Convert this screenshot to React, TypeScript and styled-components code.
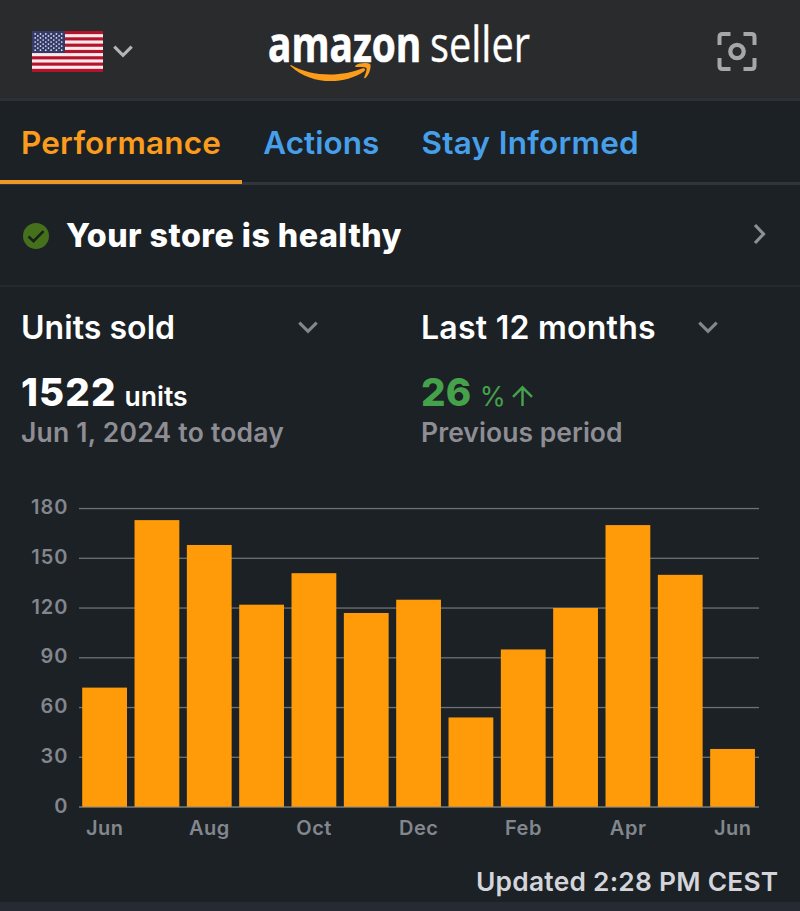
import React from "react";
import styled, { createGlobalStyle } from "styled-components";

const GlobalStyle = createGlobalStyle`
  *, *::before, *::after { box-sizing: border-box; }
  body {
    margin: 0;
    background: #1b2125;
    font-family: Inter, "Liberation Sans", sans-serif;
    -webkit-font-smoothing: antialiased;
  }
`;

const Screen = styled.div`
  width: 800px;
  height: 911px;
  display: flex;
  flex-direction: column;
  overflow: hidden;
  background: #1b2125;
  color: #fff;
`;

const Header = styled.header`
  flex: none;
  height: 101px;
  display: grid;
  grid-template-columns: 236px 1fr 236px;
  align-items: start;
  background: #2a2b2d;
  border-bottom: 3px solid #2c3037;
`;

const Region = styled.button`
  display: flex;
  align-items: center;
  gap: 10px;
  margin: 31px 0 0 32px;
  padding: 0;
  border: 0;
  background: none;
`;

const Logo = styled.svg`
  display: block;
  margin: 0 0 0 14px;
`;

const ScanButton = styled.button`
  justify-self: end;
  margin: 31px 43px 0 0;
  padding: 0;
  border: 0;
  background: none;
  svg { display: block; }
`;

const Tabs = styled.nav`
  flex: none;
  display: flex;
  height: 84px;
  box-shadow: inset 0 -3px #30353d;
`;

const Tab = styled.a<{ $active?: boolean; $spacing: number }>`
  height: 83px;
  padding: 0 21px;
  font-size: 31.5px;
  font-weight: 600;
  line-height: 84px;
  letter-spacing: ${(p) => p.$spacing}px;
  white-space: nowrap;
  color: ${(p) => (p.$active ? "#fb9c1c" : "#479fea")};
  border-bottom: ${(p) => (p.$active ? "4px solid #ec9727" : "0")};
`;

const HealthRow = styled.section`
  flex: none;
  height: 102px;
  display: flex;
  align-items: center;
  padding: 0 33px 0 22px;
  border-bottom: 2px solid #23292d;
`;

const HealthTitle = styled.h1`
  flex: 1;
  margin: 1px 0 0 16px;
  font-size: 32.2px;
  font-weight: 800;
  line-height: 40px;
  letter-spacing: 0.48px;
`;

const Metrics = styled.section`
  flex: none;
  display: grid;
  grid-template-columns: 400px 400px;
  height: 191px;
  padding-top: 20px;
`;

const Metric = styled.div`
  padding-left: 21px;
`;

const Picker = styled.div`
  display: flex;
  align-items: center;
  justify-content: space-between;
  width: 297px;
  height: 42px;
  svg { margin-bottom: 2px; }
`;

const PickerLabel = styled.h2<{ $spacing: number }>`
  margin: 0;
  font-size: 32px;
  font-weight: 600;
  line-height: 42px;
  letter-spacing: ${(p) => p.$spacing}px;
  white-space: nowrap;
`;

const ValueLine = styled.div<{ $positive?: boolean }>`
  display: flex;
  align-items: baseline;
  height: 48px;
  margin-top: 19px;
  line-height: 48px;
  color: ${(p) => (p.$positive ? "#46a14b" : "#fff")};
`;

const Value = styled.span<{ $spacing: number }>`
  font-size: 38.5px;
  font-weight: 800;
  letter-spacing: ${(p) => p.$spacing}px;
`;

const Unit = styled.span<{ $light?: boolean }>`
  margin-left: 8px;
  font-size: 26.5px;
  font-weight: ${(p) => (p.$light ? 400 : 600)};
`;

const Trend = styled.svg`
  margin-left: 6px;
`;

const Caption = styled.p<{ $spacing: number }>`
  margin: 0;
  font-size: 26.5px;
  font-weight: 600;
  line-height: 32px;
  letter-spacing: ${(p) => p.$spacing}px;
  color: #8e8d94;
`;

const ChartArea = styled.section`
  flex: none;
  height: 372px;
  svg { display: block; }
`;

const AxisText = styled.text<{ $spacing: number }>`
  font-size: 20px;
  font-weight: 600;
  letter-spacing: ${(p) => p.$spacing}px;
  fill: #83868d;
`;

const Updated = styled.p`
  flex: none;
  height: 52px;
  margin: 0;
  padding-right: 21.5px;
  font-size: 26.3px;
  font-weight: 600;
  line-height: 64px;
  letter-spacing: 0.27px;
  text-align: right;
  color: #d4d5da;
`;

const BottomStrip = styled.div`
  flex: 1;
  background: #262b33;
`;

const Flag = () => (
  <svg width="71" height="41" viewBox="0 0 71 41" aria-label="United States">
    <rect width="71" height="41" fill="#fbe9ec" />
    {Array.from({ length: 7 }, (_, i) => (
      <rect key={i} y={(i * 2 * 41) / 13} width="71" height={41 / 13} fill="#b3132b" />
    ))}
    <rect width="33" height="22" fill="#343b69" />
    {Array.from({ length: 9 }, (_, row) =>
      Array.from({ length: row % 2 ? 5 : 6 }, (_, col) => (
        <circle
          key={`${row}-${col}`}
          cx={3.2 + col * 5.3 + (row % 2 ? 2.65 : 0)}
          cy={2.9 + row * 2.03}
          r="0.85"
          fill="#e4e4ef"
        />
      ))
    )}
  </svg>
);

const ChevronDown = ({ color }: { color: string }) => (
  <svg width="20" height="13" viewBox="0 0 20 13" fill="none">
    <path d="M1.300 1.600 L10 10.300 L18.700 1.600" stroke={color} strokeWidth="3.2" />
  </svg>
);

const ChevronRight = () => (
  <svg width="14" height="25" viewBox="0 0 14 25" fill="none">
    <path d="M2 2 L10.500 11 L2 20" stroke="#8c9095" strokeWidth="3.2" />
  </svg>
);

const values = [72, 173, 158, 122, 141, 117, 125, 54, 95, 120, 170, 140, 35];
const months = ["Jun", "", "Aug", "", "Oct", "", "Dec", "", "Feb", "", "Apr", "", "Jun"];
const ticks = [0, 30, 60, 90, 120, 150, 180];

const BASE = 329;
const UNIT = 298.5 / 180;
const PITCH = 52.33;

const UnitsChart = () => (
  <svg width="800" height="372" viewBox="0 0 800 372">
    {ticks.map((t) => (
      <g key={t}>
        <rect x="79" y={BASE - t * UNIT - 0.6} width="680" height="1.3" fill="#6c7277" />
        <AxisText $spacing={1} x="68.5" y={BASE - t * UNIT + 5.5} textAnchor="end">
          {t}
        </AxisText>
      </g>
    ))}
    {values.map((v, i) => (
      <rect
        key={i}
        x={82.2 + i * PITCH}
        y={BASE - v * UNIT}
        width="44.8"
        height={v * UNIT}
        fill="#ff9a08"
      />
    ))}
    <rect x="79" y={BASE - 0.5} width="680" height="1" fill="#858078" opacity="0.7" />
    {months.map((m, i) =>
      m ? (
        <AxisText
          key={i}
          $spacing={0.5}
          x={104.8 + i * PITCH}
          y={BASE + 28}
          textAnchor="middle"
        >
          {m}
        </AxisText>
      ) : null
    )}
  </svg>
);

export default function App() {
  return (
    <Screen>
      <GlobalStyle />
      <Header>
        <Region aria-label="Choose marketplace">
          <Flag />
          <ChevronDown color="#b3b4b6" />
        </Region>
        <Logo width="300" height="90" viewBox="0 -10 300 90">
          <text
            transform="translate(18 51.600) scale(0.808 1)"
            fontFamily="'Open Sans', sans-serif"
            fontSize="48"
            fontWeight="700"
            fill="#fff"
            stroke="#fff"
            strokeWidth="0.700"
          >
            amazon
          </text>
          <text
            transform="translate(180 51.800) scale(0.812 1)"
            fontFamily="'Open Sans', sans-serif"
            fontSize="49"
            fontWeight="400"
            fill="#fff"
            stroke="#fff"
            strokeWidth="0.300"
          >
            seller
          </text>
          <path
            d="M41 55 C61 67 92 67 112 58.500 C115 57.500 116.500 60 113.500 61.800 C94 75 61 75 41 56.500 C40 55.500 40.300 54.700 41 55 Z"
            fill="#fb9d1b"
          />
          <path
            d="M105.500 55.500 C109 52.800 117 52.500 120 54 C121.500 55.500 120 64 115.500 68 C114.500 68.700 113.800 68.200 114.300 67 C115.700 63.500 117.200 59.300 116.300 58 C115.200 56.600 109.500 56.900 106.500 57.100 C105.300 57.200 104.700 56.300 105.500 55.500 Z"
            fill="#fb9d1b"
          />
        </Logo>
        <ScanButton aria-label="Scan">
          <svg width="40" height="41" viewBox="0 0 40 41" fill="none" stroke="#a6a7ab" strokeWidth="4">
            <path d="M2.500 14 V6 Q2.500 3 5.500 3 H13.500 M26.500 3 H34.500 Q37.500 3 37.500 6 V14 M37.500 27 V35 Q37.500 38 34.500 38 H26.500 M13.500 38 H5.500 Q2.500 38 2.500 35 V27" />
            <circle cx="20" cy="20.500" r="6.700" strokeWidth="4.300" />
          </svg>
        </ScanButton>
      </Header>

      <Tabs>
        <Tab $active $spacing={0.2}>Performance</Tab>
        <Tab $spacing={0.05}>Actions</Tab>
        <Tab $spacing={0.28}>Stay Informed</Tab>
      </Tabs>

      <HealthRow>
        <svg width="28" height="28" viewBox="0 0 28 28" fill="none">
          <circle cx="14" cy="15" r="13" fill="#45711d" />
          <path d="M6.500 15.500 L11.500 20.200 L21.500 10.200" stroke="#172119" strokeWidth="2.600" />
        </svg>
        <HealthTitle>Your store is healthy</HealthTitle>
        <ChevronRight />
      </HealthRow>

      <Metrics>
        <Metric>
          <Picker>
            <PickerLabel $spacing={0.05}>Units sold</PickerLabel>
            <ChevronDown color="#83878c" />
          </Picker>
          <ValueLine>
            <Value $spacing={1.1}>1522</Value>
            <Unit>units</Unit>
          </ValueLine>
          <Caption $spacing={0.22}>Jun 1, 2024 to today</Caption>
        </Metric>
        <Metric>
          <Picker>
            <PickerLabel $spacing={0.25}>Last 12 months</PickerLabel>
            <ChevronDown color="#83878c" />
          </Picker>
          <ValueLine $positive>
            <Value $spacing={0.3}>26</Value>
            <Unit $light>%</Unit>
            <Trend width="21" height="21" viewBox="0 0 21 21" fill="none">
              <path d="M10.500 21 V2.500 M1 11.800 L10.500 2.300 L20 11.800" stroke="#46a14b" strokeWidth="2.500" />
            </Trend>
          </ValueLine>
          <Caption $spacing={0.05}>Previous period</Caption>
        </Metric>
      </Metrics>

      <ChartArea>
        <UnitsChart />
      </ChartArea>
      <Updated>Updated 2:28 PM CEST</Updated>
      <BottomStrip />
    </Screen>
  );
}
